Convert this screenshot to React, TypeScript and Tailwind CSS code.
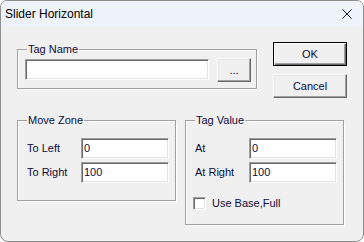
const font = "font-['Liberation_Sans',Arial,sans-serif]";

const Edit = ({ value = "", className = "" }: { value?: string; className?: string }) => (
  <div
    className={`h-[21px] bg-white border border-t-[#a0a0a0] border-l-[#a0a0a0] border-b-white border-r-white shadow-[inset_1px_1px_0_#696969,inset_-1px_-1px_0_#e3e3e3] pl-[2px] flex items-center text-[11px] text-[#0c0c3c] ${className}`}
  >
    {value}
  </div>
);

const Button = ({ label, isDefault = false, className = "" }: { label: string; isDefault?: boolean; className?: string }) => (
  <div
    className={`h-[24px] flex items-center justify-center text-[11px] text-[#0c0c3c] bg-[#f0f0f0] border ${
      isDefault
        ? "border-black shadow-[inset_1px_1px_0_#fff,inset_-1px_-1px_0_#696969,inset_-2px_-2px_0_#a0a0a0]"
        : "border-t-white border-l-white border-b-[#696969] border-r-[#696969] shadow-[inset_-1px_-1px_0_#a0a0a0,inset_1px_1px_0_#e3e3e3]"
    } ${className}`}
  >
    {label}
  </div>
);

const Group = ({ title, className = "", children }: { title: string; className?: string; children?: React.ReactNode }) => (
  <div className={`relative border border-[#a0a0a0] shadow-[inset_1px_1px_0_#fff,1px_1px_0_#fff] ${className}`}>
    <span className="absolute top-[-8px] left-[9px] px-[1px] bg-[#f0f0f0] text-[11px] leading-[14px] text-[#0c0c3c]">
      {title}
    </span>
    {children}
  </div>
);

const Row = ({ label, value }: { label: string; value: string }) => (
  <div className="flex items-center">
    <span className="w-[54px] text-[11px] text-[#0c0c3c]">{label}</span>
    <Edit value={value} className="w-[88px]" />
  </div>
);

export default function App() {
  return (
    <div className={`${font} w-[364px] h-[242px] bg-[#f0f0f0] border border-[#8e8e8e] rounded-t-[7px] rounded-b-[8px] overflow-hidden`}>
      <div className="h-[26px] bg-[#eef3fa] flex items-center justify-between pl-[4px] pr-[10px]">
        <span className="text-[12px] text-black">Slider Horizontal</span>
        <svg width="10" height="10" viewBox="0 0 10 10" className="mr-[1px]">
          <path d="M0.5 0.5 L9.5 9.5 M9.5 0.5 L0.5 9.5" stroke="#1a1a1a" strokeWidth="1" />
        </svg>
      </div>
      <div className="pl-[16px] pt-[15px]">
        <div className="flex items-start">
          <Group title="Tag Name" className="w-[240px] h-[40px] mt-[7px]">
            <div className="flex items-start pl-[7px] pt-[8px]">
              <Edit className="w-[184px] h-[20px] mt-[1px]" />
              <Button label="..." className="w-[34px] ml-[8px]" />
            </div>
          </Group>
          <div className="ml-[16px] w-[74px] flex flex-col">
            <Button label="OK" isDefault />
            <Button label="Cancel" className="mt-[8px]" />
          </div>
        </div>
        <div className="flex items-start mt-[22px]">
          <Group title="Move Zone" className="w-[159px] h-[81px]">
            <div className="flex flex-col gap-[3px] pl-[9px] pt-[17px]">
              <Row label="To Left" value="0" />
              <Row label="To Right" value="100" />
            </div>
          </Group>
          <Group title="Tag Value" className="w-[159px] h-[105px] ml-[9px]">
            <div className="flex flex-col gap-[3px] pl-[9px] pt-[17px]">
              <Row label="At" value="0" />
              <Row label="At Right" value="100" />
              <div className="flex items-center mt-[9px] ml-[-2px]">
                <div className="w-[13px] h-[13px] bg-white border border-t-[#a0a0a0] border-l-[#a0a0a0] border-b-white border-r-white shadow-[inset_1px_1px_0_#696969,inset_-1px_-1px_0_#e3e3e3]" />
                <span className="ml-[6px] text-[11px] text-[#0c0c3c]">Use Base,Full</span>
              </div>
            </div>
          </Group>
        </div>
      </div>
    </div>
  );
}
